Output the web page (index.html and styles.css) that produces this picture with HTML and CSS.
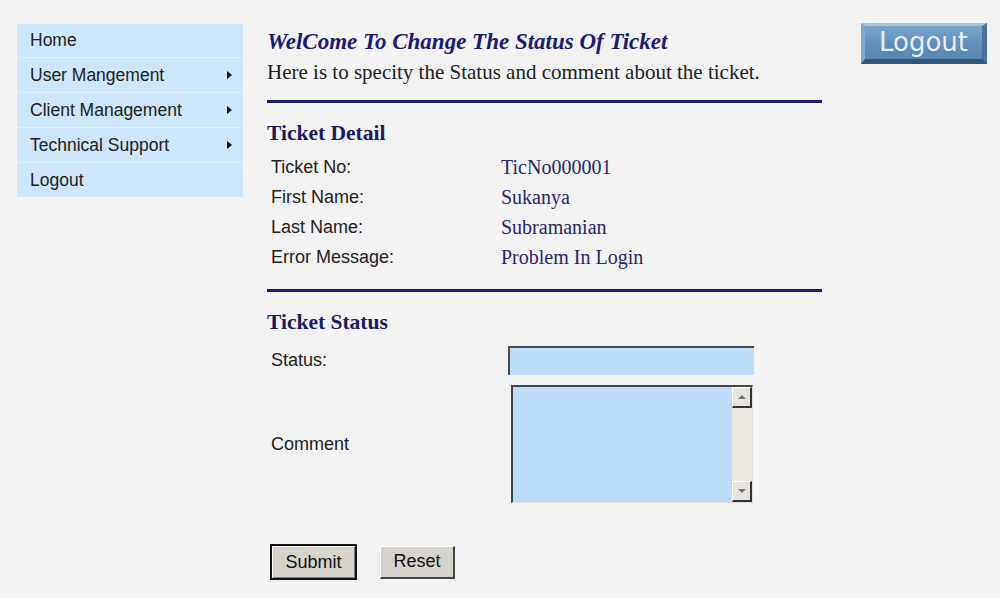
FILE: index.html
```html
<!DOCTYPE html>
<html>
<head>
<meta charset="utf-8">
<link rel="stylesheet" href="styles.css">
</head>
<body>
<div class="page">
  <nav class="menu">
    <div class="item">Home</div>
    <div class="item sub">User Mangement<span class="arrow"></span></div>
    <div class="item sub">Client Management<span class="arrow"></span></div>
    <div class="item sub">Technical Support<span class="arrow"></span></div>
    <div class="item">Logout</div>
  </nav>
  <main class="main">
    <h1 class="title">WelCome To Change The Status Of Ticket</h1>
    <p class="intro">Here is to specity the Status and comment about the ticket.</p>
    <hr class="rule">
    <h2 class="section">Ticket Detail</h2>
    <div class="details">
      <div class="row"><span class="label">Ticket No:</span><span class="value">TicNo000001</span></div>
      <div class="row"><span class="label">First Name:</span><span class="value">Sukanya</span></div>
      <div class="row"><span class="label">Last Name:</span><span class="value">Subramanian</span></div>
      <div class="row"><span class="label">Error Message:</span><span class="value">Problem In Login</span></div>
    </div>
    <hr class="rule rule2">
    <h2 class="section">Ticket Status</h2>
    <div class="form">
      <div class="frow status-row">
        <span class="label">Status:</span>
        <input class="field" type="text">
      </div>
      <div class="frow comment-row">
        <span class="label">Comment</span>
        <div class="area">
          <textarea class="areabox"></textarea>
          <div class="scroll">
            <div class="sbtn up"><span class="tri-up"></span></div>
            <div class="track"></div>
            <div class="sbtn down"><span class="tri-down"></span></div>
          </div>
        </div>
      </div>
      <div class="buttons">
        <button class="btn submit">Submit</button>
        <button class="btn reset">Reset</button>
      </div>
    </div>
  </main>
  <div class="side">
    <button class="logout">Logout</button>
  </div>
</div>
</body>
</html>
```
FILE: styles.css
```css
html, body {
  margin: 0;
  padding: 0;
  background: #f2f2f2;
}
.page {
  display: flex;
  align-items: flex-start;
  width: 1000px;
  height: 598px;
  overflow: hidden;
}
.menu {
  margin: 24px 0 0 17px;
  width: 226px;
  background: #cde6fb;
  font-family: "Liberation Sans", Arial, sans-serif;
  font-size: 17.5px;
  color: #222;
}
.item {
  height: 34px;
  padding-left: 13px;
  border-top: 1px solid #e2eef9;
  display: flex;
  align-items: center;
  justify-content: space-between;
  padding-right: 11px;
}
.item:first-child {
  border-top: none;
  height: 33px;
}
.arrow {
  width: 0;
  height: 0;
  border-top: 4px solid transparent;
  border-bottom: 4px solid transparent;
  border-left: 5px solid #111;
}
.main {
  margin-left: 24px;
  width: 555px;
  padding-top: 28px;
}
.title {
  margin: 0;
  font-family: "Liberation Serif", "Times New Roman", serif;
  font-style: italic;
  font-weight: bold;
  font-size: 23px;
  line-height: 27px;
  color: #1b1b6f;
}
.intro {
  margin: 4px 0 0 0;
  font-family: "Liberation Serif", "Times New Roman", serif;
  font-size: 21px;
  line-height: 26px;
  color: #222;
}
.rule {
  margin: 15px 0 0 0;
  border: none;
  height: 3px;
  background: #1c1c6e;
}
.rule2 {
  margin-top: 17px;
}
.section {
  margin: 18px 0 0 0;
  font-family: "Liberation Serif", "Times New Roman", serif;
  font-weight: bold;
  font-size: 21.5px;
  line-height: 24px;
  color: #1b1b5e;
}
.details {
  margin-top: 7px;
  padding-left: 4px;
}
.row {
  display: flex;
  height: 30px;
  align-items: center;
}
.label {
  width: 230px;
  flex: none;
  font-family: "Liberation Sans", Arial, sans-serif;
  font-size: 18px;
  color: #222;
}
.value {
  font-family: "Liberation Serif", "Times New Roman", serif;
  font-size: 20px;
  color: #27276b;
}
.form {
  padding-left: 4px;
  margin-top: 12px;
}
.frow {
  display: flex;
  align-items: center;
}
.field {
  margin: 0 0 0 7px;
  box-sizing: border-box;
  width: 246px;
  height: 29px;
  background: #bcdcfb;
  border-style: solid;
  border-width: 2px 0 0 2px;
  border-color: #4a4a4a;
  padding: 0;
  outline: none;
}
.comment-row {
  margin-top: 10px;
}
.area {
  margin-left: 10px;
  box-sizing: border-box;
  width: 242px;
  height: 118px;
  display: flex;
  border-style: solid;
  border-width: 2px 1px 1px 2px;
  border-color: #444 #ddd #ddd #444;
  background: #bcdcfb;
}
.areabox {
  flex: 1;
  border: none;
  background: #bcdcfb;
  resize: none;
  outline: none;
  margin: 0;
  padding: 0;
  overflow: hidden;
}
.scroll {
  width: 20px;
  display: flex;
  flex-direction: column;
  background: #ebe8e1;
}
.track {
  flex: 1;
}
.sbtn {
  box-sizing: border-box;
  height: 21px;
  background: #e6e4dc;
  border-style: solid;
  border-width: 1px 2px 2px 1px;
  border-color: #fff #333 #333 #fff;
  display: flex;
  align-items: center;
  justify-content: center;
}
.tri-up {
  width: 0;
  height: 0;
  border-left: 4px solid transparent;
  border-right: 4px solid transparent;
  border-bottom: 4px solid #777;
}
.tri-down {
  width: 0;
  height: 0;
  border-left: 4px solid transparent;
  border-right: 4px solid transparent;
  border-top: 4px solid #777;
}
.buttons {
  margin-top: 41px;
  display: flex;
  align-items: center;
  gap: 23px;
  margin-left: -1px;
}
.btn {
  font-family: "Liberation Sans", Arial, sans-serif;
  font-size: 18px;
  color: #111;
  background: #d6d3cc;
  margin: 0;
  padding: 0;
}
.submit {
  width: 87px;
  height: 36px;
  border: 2px solid #111;
  box-shadow: inset 1px 1px 0 #fff, inset -1px -1px 0 #808080;
}
.reset {
  width: 75px;
  height: 33px;
  border-style: solid;
  border-width: 1px 2px 2px 1px;
  border-color: #fff #444 #444 #fff;
}
.side {
  margin-left: 39px;
  padding-top: 23px;
}
.logout {
  width: 126px;
  height: 41px;
  margin: 0;
  padding: 0 0 2px 0;
  font-family: "DejaVu Sans", Verdana, sans-serif;
  font-size: 26px;
  color: #e6eef6;
  background: linear-gradient(#7aa6cc, #5f8fba 55%, #5686b2);
  border-style: solid;
  border-width: 3px 5px 5px 4px;
  border-color: #a9c6df #4a7199 #2f5578 #7ea6c9;
}
```
